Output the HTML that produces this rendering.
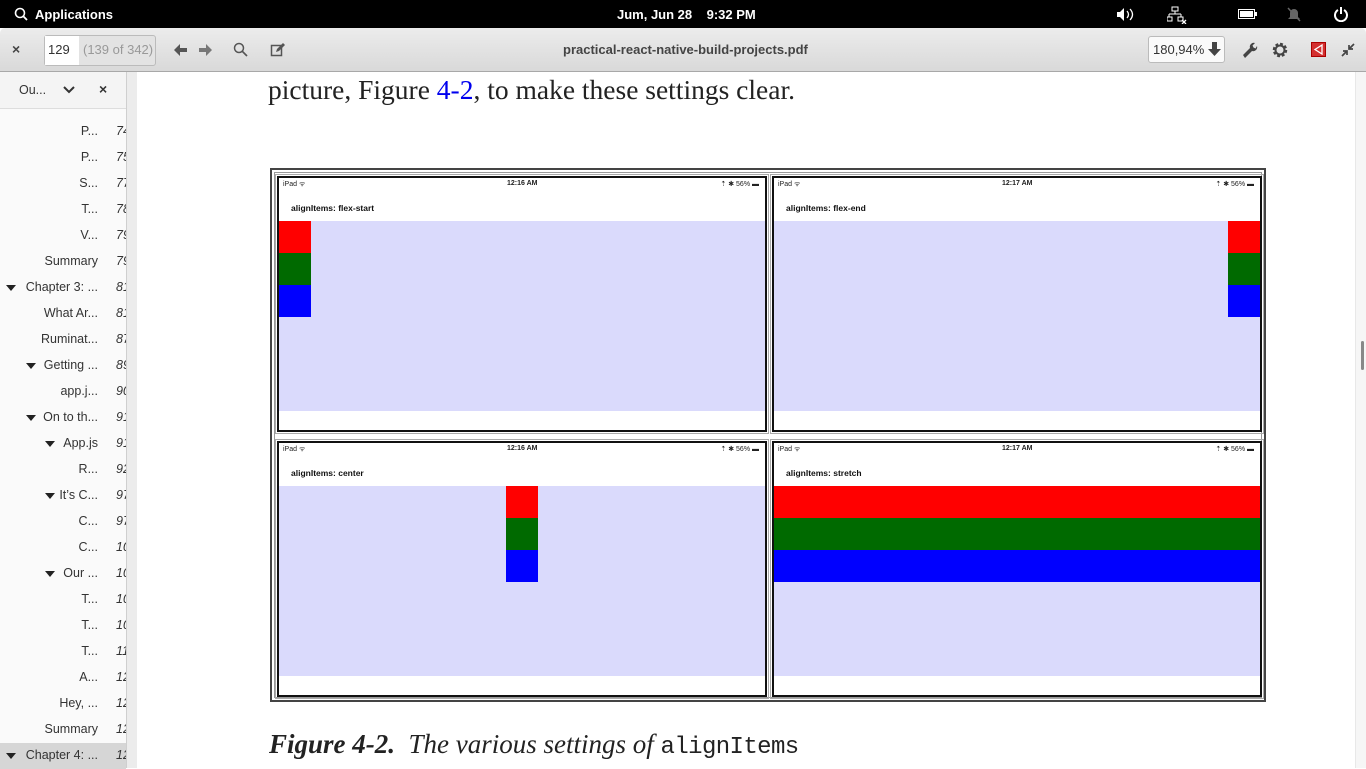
<!DOCTYPE html>
<html><head><meta charset="utf-8"><style>
*{margin:0;padding:0;box-sizing:border-box}
body{width:1366px;height:768px;overflow:hidden;position:relative;background:#fff;font-family:"Liberation Sans",sans-serif}
.abs{position:absolute}
#top{left:0;top:0;width:1366px;height:28px;background:#000;color:#fff;font-size:13px;font-weight:bold}
#tb{left:0;top:28px;width:1366px;height:44px;background:linear-gradient(#ececec,#d9d9d9);border-bottom:1px solid #a8a8a8;border-radius:5px 5px 0 0}
#side{left:0;top:72px;width:127px;height:696px;background:#fafafa;border-right:1px solid #cfcfcf}
#gap{left:127px;top:72px;width:10px;height:696px;background:#ececec}
.row{position:absolute;left:0;width:126px;height:26px;font-size:12.5px;color:#333}
.row .l{position:absolute;right:28px;top:5px;white-space:nowrap}
.row .p{position:absolute;left:116px;top:5px;font-style:italic;width:10px;overflow:hidden;white-space:nowrap}
.row .t{position:absolute;top:10px;width:0;height:0;border-left:5px solid transparent;border-right:5px solid transparent;border-top:6px solid #222}
.panel{position:absolute;border:2px solid #111;background:#fff;outline:1px solid #aaa;outline-offset:1px}
.sb{position:absolute;top:2px;font-size:7px;color:#222}
.ttl{position:absolute;top:25px;left:12px;font-size:8.5px;font-weight:bold;color:#111}
.lav{position:absolute;left:0;right:0;top:43px;height:190px;background:#dadafc}
.bx{position:absolute;width:32px;height:32px}
</style></head><body>
<div id="top" class="abs">
 <svg class="abs" style="left:14px;top:7px" width="14" height="14"><circle cx="6" cy="6" r="4.5" fill="none" stroke="#fff" stroke-width="1.6"/><line x1="9.3" y1="9.3" x2="13" y2="13" stroke="#fff" stroke-width="1.8"/></svg>
 <span class="abs" style="left:35px;top:7px">Applications</span>
 <span class="abs" style="left:617px;top:7px">Jum, Jun 28&nbsp;&nbsp;&nbsp;&nbsp;9:32 PM</span>
 <svg class="abs" style="left:1116px;top:7px" width="20" height="15"><path d="M1 5h3l4-4v13l-4-4H1z" fill="#fff"/><path d="M11 4q3 3.5 0 7M14 2q5 5.5 0 11" stroke="#fff" fill="none" stroke-width="1.3"/></svg>
 <svg class="abs" style="left:1167px;top:6px" width="20" height="18"><rect x="5" y="1" width="6" height="4" fill="none" stroke="#fff"/><path d="M8 5v3M2 8h12M2 8v3M14 8v3" stroke="#fff"/><rect x="0" y="11" width="5" height="4" fill="none" stroke="#fff"/><rect x="11" y="11" width="5" height="4" fill="none" stroke="#fff"/><path d="M15 14l4 4M19 14l-4 4" stroke="#fff" stroke-width="1.3"/></svg>
 <svg class="abs" style="left:1238px;top:9px" width="20" height="11"><rect x="0.5" y="0.5" width="16" height="9" fill="none" stroke="#fff"/><rect x="2" y="2" width="13" height="6" fill="#fff"/><rect x="17" y="3" width="2" height="4" fill="#fff"/></svg>
 <svg class="abs" style="left:1286px;top:6px" width="16" height="16"><path d="M4 11V7a4 4 0 018 0v4l2 2H2z" fill="#666"/><line x1="2" y1="2" x2="14" y2="15" stroke="#666" stroke-width="1.5"/></svg>
 <svg class="abs" style="left:1333px;top:6px" width="16" height="16"><path d="M5 4a6 6 0 106 0" fill="none" stroke="#fff" stroke-width="2"/><line x1="8" y1="1" x2="8" y2="8" stroke="#fff" stroke-width="2"/></svg>
</div>
<div id="tb" class="abs">
 <span class="abs" style="left:12px;top:13px;font-size:14px;color:#444;font-weight:bold">×</span>
 <div class="abs" style="left:44px;top:7px;width:112px;height:31px;border:1px solid #bbb;border-radius:3px;background:#e3e3e3"></div>
 <div class="abs" style="left:45px;top:8px;width:34px;height:29px;background:#fff"></div>
 <span class="abs" style="left:48px;top:14px;font-size:13px;color:#333">129</span>
 <span class="abs" style="left:83px;top:14px;font-size:13px;color:#999">(139 of 342)</span>
 <svg class="abs" style="left:173px;top:15px" width="40" height="14"><path d="M1 7l6-6v4h7v4H7v4z" fill="#555"/><path d="M39 7l-6-6v4h-7v4h7v4z" fill="#777"/></svg>
 <svg class="abs" style="left:233px;top:14px" width="16" height="16"><circle cx="6" cy="6" r="4.5" fill="none" stroke="#555" stroke-width="1.5"/><line x1="9.3" y1="9.3" x2="14" y2="14" stroke="#555" stroke-width="1.7"/></svg>
 <svg class="abs" style="left:270px;top:14px" width="16" height="16"><rect x="1.5" y="3.5" width="10" height="10" fill="none" stroke="#555" stroke-width="1.5"/><path d="M6 10l1-3 6-6 2 2-6 6z" fill="#555"/></svg>
 <span class="abs" style="left:563px;top:14px;font-size:13px;font-weight:bold;color:#444">practical-react-native-build-projects.pdf</span>
 <div class="abs" style="left:1148px;top:8px;width:77px;height:27px;border:1px solid #bbb;border-radius:3px;background:#fafafa"></div>
 <span class="abs" style="left:1153px;top:14px;font-size:13px;color:#333">180,94%</span>
 <svg class="abs" style="left:1208px;top:14px" width="13" height="15"><path d="M4 0h5v7h4l-6.5 7L0 7h4z" fill="#444"/></svg>
 <svg class="abs" style="left:1241px;top:13px" width="17" height="17"><path d="M2 14l7-7a4 4 0 015-5l-2.5 2.5 1 2 2 1L16 5a4 4 0 01-5 5l-7 7z" fill="#444"/></svg>
 <svg class="abs" style="left:1271px;top:13px" width="18" height="18"><circle cx="9" cy="9" r="5.5" fill="none" stroke="#444" stroke-width="3.5" stroke-dasharray="2.6 1.7"/><circle cx="9" cy="9" r="4.5" fill="none" stroke="#444" stroke-width="2"/></svg>
 <div class="abs" style="left:1311px;top:14px;width:15px;height:15px;background:#d32f2f;border:1px solid #a00"></div>
 <svg class="abs" style="left:1313px;top:16px" width="11" height="11"><path d="M9 1L2 5.5 9 10z" fill="none" stroke="#fff" stroke-width="1.3"/></svg>
 <svg class="abs" style="left:1341px;top:15px" width="14" height="14"><path d="M13 1L8 6M8 2v4h4M1 13l5-5M2 8h4v4" stroke="#444" stroke-width="1.7" fill="none"/></svg>
</div>
<div id="side" class="abs">
 <div class="abs" style="left:0;top:0;width:126px;height:37px;border-bottom:1px solid #ddd;background:#f4f4f4"></div>
 <span class="abs" style="left:19px;top:11px;font-size:12.5px;color:#333">Ou...</span>
 <svg class="abs" style="left:63px;top:14px" width="12" height="9"><path d="M1 1l5 5 5-5" stroke="#333" stroke-width="2" fill="none"/></svg>
 <span class="abs" style="left:99px;top:9px;font-size:14px;color:#333;font-weight:bold">×</span>
</div>
<div id="gap" class="abs"></div>
<div id="rows"></div>
<div class="abs" style="left:1355px;top:72px;width:11px;height:696px;background:#f6f6f6;border-left:1px solid #e8e8e8"></div>
<div class="abs" style="left:1361px;top:341px;width:3px;height:29px;background:#888;border-radius:2px"></div>

<div class="abs" style="left:268px;top:74px;font-family:'Liberation Serif','DejaVu Serif',serif;font-size:27.5px;color:#222;white-space:nowrap">picture, Figure <span style="color:#00e">4-2</span>, to make these settings clear.</div>

<div class="abs" style="left:270px;top:168px;width:996px;height:534px;border:2px solid #444;outline:1px solid #999;outline-offset:-5px"></div>

<div class="panel" style="left:277px;top:176px;width:490px;height:256px">
 <span class="sb" style="left:4px">iPad ᯤ</span><span class="sb" style="left:228px;font-weight:bold">12:16 AM</span><span class="sb" style="right:6px">⇡ ✱ 56% ▬</span>
 <div class="ttl">alignItems: flex-start</div>
 <div class="lav"></div>
 <div class="bx" style="left:0;top:43px;background:#f00"></div><div class="bx" style="left:0;top:75px;background:#006a00"></div><div class="bx" style="left:0;top:107px;background:#00f"></div>
</div>
<div class="panel" style="left:772px;top:176px;width:490px;height:256px">
 <span class="sb" style="left:4px">iPad ᯤ</span><span class="sb" style="left:228px;font-weight:bold">12:17 AM</span><span class="sb" style="right:6px">⇡ ✱ 56% ▬</span>
 <div class="ttl">alignItems: flex-end</div>
 <div class="lav"></div>
 <div class="bx" style="right:0;top:43px;background:#f00"></div><div class="bx" style="right:0;top:75px;background:#006a00"></div><div class="bx" style="right:0;top:107px;background:#00f"></div>
</div>
<div class="panel" style="left:277px;top:441px;width:490px;height:256px">
 <span class="sb" style="left:4px">iPad ᯤ</span><span class="sb" style="left:228px;font-weight:bold">12:16 AM</span><span class="sb" style="right:6px">⇡ ✱ 56% ▬</span>
 <div class="ttl">alignItems: center</div>
 <div class="lav"></div>
 <div class="bx" style="left:227px;top:43px;background:#f00"></div><div class="bx" style="left:227px;top:75px;background:#006a00"></div><div class="bx" style="left:227px;top:107px;background:#00f"></div>
</div>
<div class="panel" style="left:772px;top:441px;width:490px;height:256px">
 <span class="sb" style="left:4px">iPad ᯤ</span><span class="sb" style="left:228px;font-weight:bold">12:17 AM</span><span class="sb" style="right:6px">⇡ ✱ 56% ▬</span>
 <div class="ttl">alignItems: stretch</div>
 <div class="lav"></div>
 <div class="bx" style="left:0;right:0;width:auto;top:43px;background:#f00"></div><div class="bx" style="left:0;right:0;width:auto;top:75px;background:#006a00"></div><div class="bx" style="left:0;right:0;width:auto;top:107px;background:#00f"></div>
</div>

<div class="abs" style="left:269px;top:729px;font-family:'Liberation Serif','DejaVu Serif',serif;font-size:27px;font-style:italic;color:#222;white-space:nowrap"><b>Figure 4-2.</b>&nbsp; The various settings of <span style="font-family:'Liberation Mono',monospace;font-style:normal;font-size:24px;letter-spacing:-0.6px">alignItems</span></div>

<script>
var d=[["P...","74"],["P...","75"],["S...","77"],["T...","78"],["V...","79"],["Summary","79"],["Chapter 3: ...","81",10],["What Ar...","81"],["Ruminat...","87"],["Getting ...","89",30],["app.j...","90"],["On to th...","91",30],["App.js","91",49],["R...","92"],["It’s C...","97",49],["C...","97"],["C...","100"],["Our ...","103",49],["T...","105"],["T...","106"],["T...","113"],["A...","121"],["Hey, ...","122"],["Summary","123"],["Chapter 4: ...","125",10]];
var h="";d.forEach(function(r,i){var y=119+i*26;var bg=i==24?"background:#d6d6d6;":"";
h+='<div class="row" style="top:'+y+'px;'+bg+'">'+(r[2]!=null?'<div class="t" style="left:'+(r[2]-4)+'px"></div>':'')+'<span class="l">'+r[0]+'</span><span class="p">'+r[1]+'</span></div>';});
document.getElementById("rows").innerHTML=h;
</script>
</body></html>
